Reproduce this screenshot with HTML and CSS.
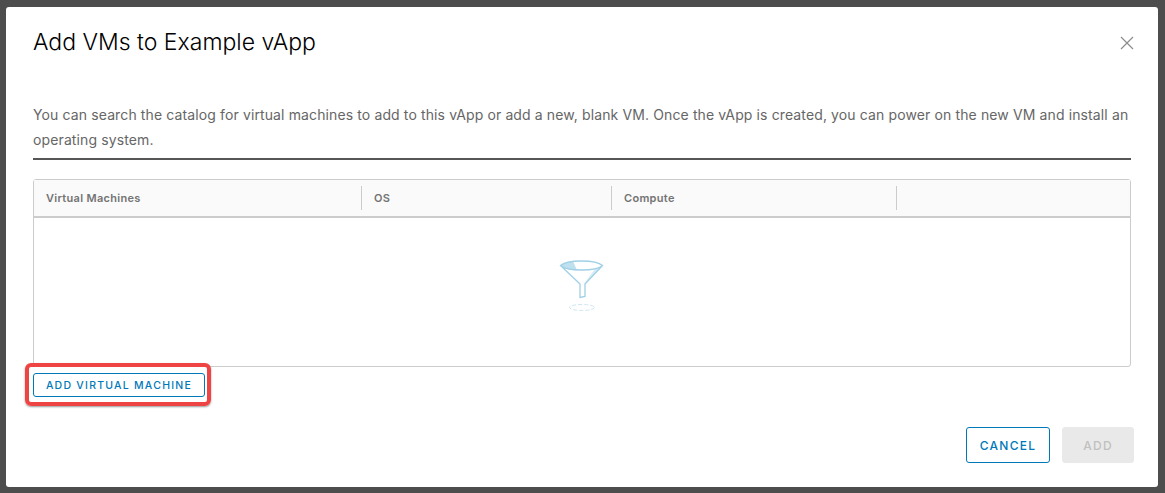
FILE: index.html
```html
<html>

<head>
  <meta content="text/html;charset=utf-8" http-equiv="Content-Type" />
  <link rel="stylesheet" href="styles.css">
</head>

<body>
  <div class="modal">
    <div class="modal-header">
      <h1>Add VMs to Example vApp</h1>
      <svg class="close" width="14" height="14" viewBox="0 0 14 14">
        <path d="M1 1L13 13M13 1L1 13" stroke="#8c8c8c" stroke-width="1.2" fill="none" />
      </svg>
    </div>

    <div class="modal-body">
      <p class="intro">You can search the catalog for virtual machines to add to this vApp or add a new, blank VM. Once the vApp is created, you can power on the new VM and install an operating system.</p>

      <div class="grid">
        <div class="grid-head">
          <div class="col col-name">Virtual Machines</div>
          <div class="col col-os">OS</div>
          <div class="col col-compute">Compute</div>
          <div class="col col-rest"></div>
        </div>
        <div class="grid-empty">
          <svg width="48" height="56" viewBox="0 0 48 56">
            <path d="M3 7.500C5 5 10 3.500 15 3.200L19 12.200C11 12 6 10.500 3 7.500Z" fill="#bfe0ef" />
            <path d="M37 11L44 8.500L27 25V30L26.500 25L37 11Z" fill="#d5ebf5" />
            <path d="M2.500 7.500C9 1.500 38 1.500 44.500 7.500C38 13.500 9 13.500 2.500 7.500Z M2.500 7.500L22 26V39.500L27 38.500V26L44.500 7.500" fill="none" stroke="#9fd0e6" stroke-width="1.300" />
            <ellipse cx="24" cy="49.500" rx="12.500" ry="3" fill="none" stroke="#cde6f2" stroke-width="1" stroke-dasharray="4 2" />
          </svg>
        </div>
      </div>

      <button class="btn btn-small">Add Virtual Machine</button>
    </div>

    <div class="modal-footer">
      <button class="btn btn-outline">Cancel</button>
      <button class="btn btn-disabled">Add</button>
    </div>

    <div class="callout"></div>
  </div>
</body>

</html>
```

FILE: styles.css
```css
html {
  margin: 0;
  height: 100%;
  font-family: "Inter", "Open Sans", sans-serif;
}

body {
  margin: 0;
  height: 493px;
  overflow: hidden;
  background-color: #4d4d4d;
  padding: 7px 7px 6px 6px;
  box-sizing: border-box;
}

.modal {
  position: relative;
  height: 480px;
  box-sizing: border-box;
  padding: 0 24px 24px 27px;
  background-color: #fff;
  border-radius: 3px;
  display: flex;
  flex-direction: column;
}

.modal-header {
  display: flex;
  align-items: center;
  justify-content: space-between;
  height: 70px;
}

.close {
  margin-top: 2px;
}

h1 {
  margin: 0;
  font-size: 23px;
  font-weight: 300;
  color: #000;
}

.modal-body {
  flex-grow: 1;
  padding-right: 3px;
}

.intro {
  margin: 25px 0 0;
  padding-bottom: 6px;
  font-size: 14px;
  line-height: 25px;
  letter-spacing: 0.12px;
  color: #666;
  border-bottom: 2px solid #565656;
}

.grid {
  margin-top: 19px;
  border: 1px solid #ccc;
  border-radius: 3px;
}

.grid-head {
  display: flex;
  align-items: center;
  height: 36px;
  background-color: #fafafa;
  border-bottom: 2px solid #ccc;
}

.col {
  height: 24px;
  line-height: 24px;
  padding-left: 12px;
  box-sizing: border-box;
  border-right: 1px solid #ccc;
  font-size: 11px;
  font-weight: 600;
  letter-spacing: 0.3px;
  color: #737373;
}

.col-name {
  width: 328px;
}

.col-os {
  width: 250px;
}

.col-compute {
  width: 285px;
}

.col-rest {
  flex-grow: 1;
  border-right: none;
}

.grid-empty {
  height: 148px;
  box-sizing: border-box;
  padding-top: 40px;
  display: flex;
  align-items: flex-start;
  justify-content: center;
}

.btn {
  display: block;
  box-sizing: border-box;
  font-family: inherit;
  text-transform: uppercase;
  border-radius: 3px;
  background-color: #fff;
}

.btn-small {
  width: 172px;
  height: 24px;
  margin-top: 6px;
  padding: 0;
  font-size: 10.500px;
  font-weight: 500;
  letter-spacing: 1.25px;
  color: #0079b8;
  border: 1px solid #0079b8;
}

.modal-footer {
  display: flex;
  justify-content: flex-end;
  gap: 12px;
}

.modal-footer .btn {
  height: 36px;
  padding: 0;
  font-size: 12px;
  font-weight: 500;
  letter-spacing: 1.3px;
}

.btn-outline {
  width: 84px;
  color: #0079b8;
  border: 1px solid #0079b8;
}

.modal-footer .btn-disabled {
  width: 72px;
  color: #c0c0c0;
  background-color: #e9e9e9;
  border: 1px solid #e9e9e9;
}

/* red highlight drawn on top of the dialog */
.callout {
  position: absolute;
  left: 19px;
  top: 356px;
  width: 186px;
  height: 43px;
  box-sizing: border-box;
  border: 4px solid #ef4444;
  border-radius: 6px;
  box-shadow: 0 1px 2px rgba(0, 0, 0, 0.4);
}
```
